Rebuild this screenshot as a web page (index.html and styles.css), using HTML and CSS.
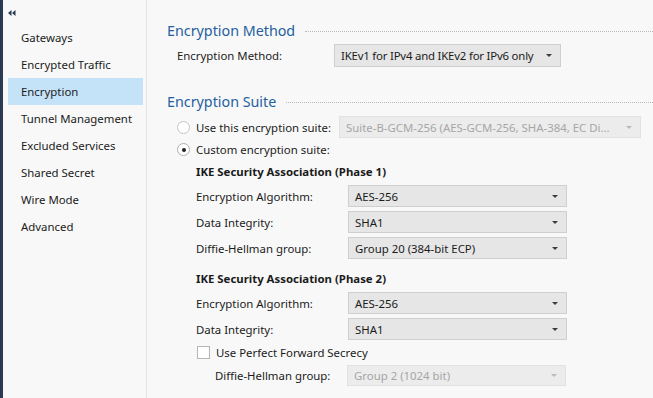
FILE: index.html
```html
<!DOCTYPE html>
<html><head><title>Encryption</title><meta charset="utf-8">
<link rel="stylesheet" href="styles.css">
</head>
<body>
<div class="ventana">
    <div class="franja"></div>
    <div class="lateral">
        <div class="plegar"><svg width="8" height="6" viewBox="0 0 8 6"><path d="M0 3L3.5 0V6Z M4 3L7.5 0V6Z" fill="#2a3a52"/></svg></div>
        <div class="item">Gateways</div>
        <div class="item">Encrypted Traffic</div>
        <div class="item activo">Encryption</div>
        <div class="item">Tunnel Management</div>
        <div class="item">Excluded Services</div>
        <div class="item">Shared Secret</div>
        <div class="item">Wire Mode</div>
        <div class="item">Advanced</div>
    </div>
    <div class="panel">
        <div class="titulo">Encryption Method</div>
        <div class="fila metodo">
            <span class="etiqueta eMetodo">Encryption Method:</span>
            <div class="combo cMetodo"><span>IKEv1 for IPv4 and IKEv2 for IPv6 only</span><i class="flecha"></i></div>
        </div>

        <div class="titulo t2">Encryption Suite</div>
        <div class="fila suite primera">
            <span class="radio"></span><span class="etiqueta eSuite">Use this encryption suite:</span>
            <div class="combo off cSuite"><span>Suite-B-GCM-256 (AES-GCM-256, SHA-384, EC Di...</span><i class="flecha"></i></div>
        </div>
        <div class="fila suite">
            <span class="radio marcado"></span><span class="etiqueta">Custom encryption suite:</span>
        </div>

        <div class="bloque">
            <div class="subtitulo">IKE Security Association (Phase 1)</div>
            <div class="fila"><span class="etiqueta eFase">Encryption Algorithm:</span><div class="combo cFase"><span>AES-256</span><i class="flecha"></i></div></div>
            <div class="fila"><span class="etiqueta eFase">Data Integrity:</span><div class="combo cFase"><span>SHA1</span><i class="flecha"></i></div></div>
            <div class="fila"><span class="etiqueta eFase">Diffie-Hellman group:</span><div class="combo cFase"><span>Group 20 (384-bit ECP)</span><i class="flecha"></i></div></div>

            <div class="subtitulo s2">IKE Security Association (Phase 2)</div>
            <div class="fila"><span class="etiqueta eFase">Encryption Algorithm:</span><div class="combo cFase"><span>AES-256</span><i class="flecha"></i></div></div>
            <div class="fila"><span class="etiqueta eFase">Data Integrity:</span><div class="combo cFase"><span>SHA1</span><i class="flecha"></i></div></div>
            <div class="fila check"><span class="caja"></span><span class="etiqueta">Use Perfect Forward Secrecy</span></div>
            <div class="fila sangria"><span class="etiqueta eDh">Diffie-Hellman group:</span><div class="combo off cFase"><span>Group 2 (1024 bit)</span><i class="flecha"></i></div></div>
        </div>
    </div>
</div>
</body>
</html>
```

FILE: styles.css
```css
body {margin:0; font-family: "Noto Sans", "Open Sans", sans-serif; font-size:11.4px; color:#1b1b1b; background:#f8f8f8;}
.ventana {display:flex; width:653px; height:398px; overflow:hidden;}
.franja {width:3px; background:#2a3a52; flex-shrink:0;}

/* menu lateral */
.lateral {width:144px; border-right:1px solid #e2e2e2; padding:10px 0 0 5px; box-sizing:border-box; flex-shrink:0;}
.plegar {height:14px; padding-left:0;}
.plegar svg {display:block;}
.item {height:27px; line-height:27px; padding-left:13px; margin-right:3px; white-space:nowrap;}
.item.activo {background:#c5e3f8;}

/* panel derecho */
.panel {flex:1; padding:20px 0 0 20px;}
.titulo {display:flex; align-items:center; height:20px; font-size:14.3px; color:#24609f;}
.titulo::after {content:""; flex:1; border-top:1px dotted #b8b8b8; margin-left:10px; margin-top:2px;}
.t2 {margin-top:24px;}

.fila {display:flex; align-items:center; height:22px; margin-top:4px;}
.metodo {height:23px; padding-left:10px;}
.suite {padding-left:10px; margin-top:0;}
.suite.primera {margin-top:5px;}
.etiqueta {white-space:nowrap; flex-shrink:0;}
.eMetodo {width:157px;}
.eSuite {width:143px;}
.eFase {width:152px;}
.eDh {width:132px;}

.combo {display:flex; align-items:center; justify-content:space-between; height:100%; box-sizing:border-box; flex-shrink:0;
    background:#e6e6e6; border:1px solid #cfcfcf; padding:0 8px 0 6px; white-space:nowrap;}
.cMetodo {width:227px; letter-spacing:-0.2px;}
.cSuite {width:302px;}
.cFase {width:219px;}
.combo.off {background:#ececec; border-color:#e2e2e2; color:#a6a6a6;}
.flecha {width:0; height:0; border-left:3px solid transparent; border-right:3px solid transparent; border-top:3px solid #3c3c3c;}
.off .flecha {border-top-color:#b9b9b9;}

.radio {width:11px; height:11px; border:1px solid #c4c4c4; border-radius:50%; background:#fff; margin-right:6px; position:relative;}
.radio.marcado {border-color:#b0b0b0;}
.radio.marcado::after {content:""; position:absolute; left:4px; top:4px; width:4px; height:4px; border-radius:50%; background:#222;}

.bloque {padding-left:29px;}
.subtitulo {font-weight:bold; height:22px; line-height:22px; margin-top:1px;}
.s2 {margin-top:9px;}
.bloque .subtitulo + .fila {margin-top:2px;}
.caja {width:11px; height:11px; border:1px solid #b5b5b5; background:#fff; margin-right:6px;}
.check {margin-top:1px; padding-left:1px;}
.sangria {padding-left:19px; height:21px; margin-top:2px;}
```
